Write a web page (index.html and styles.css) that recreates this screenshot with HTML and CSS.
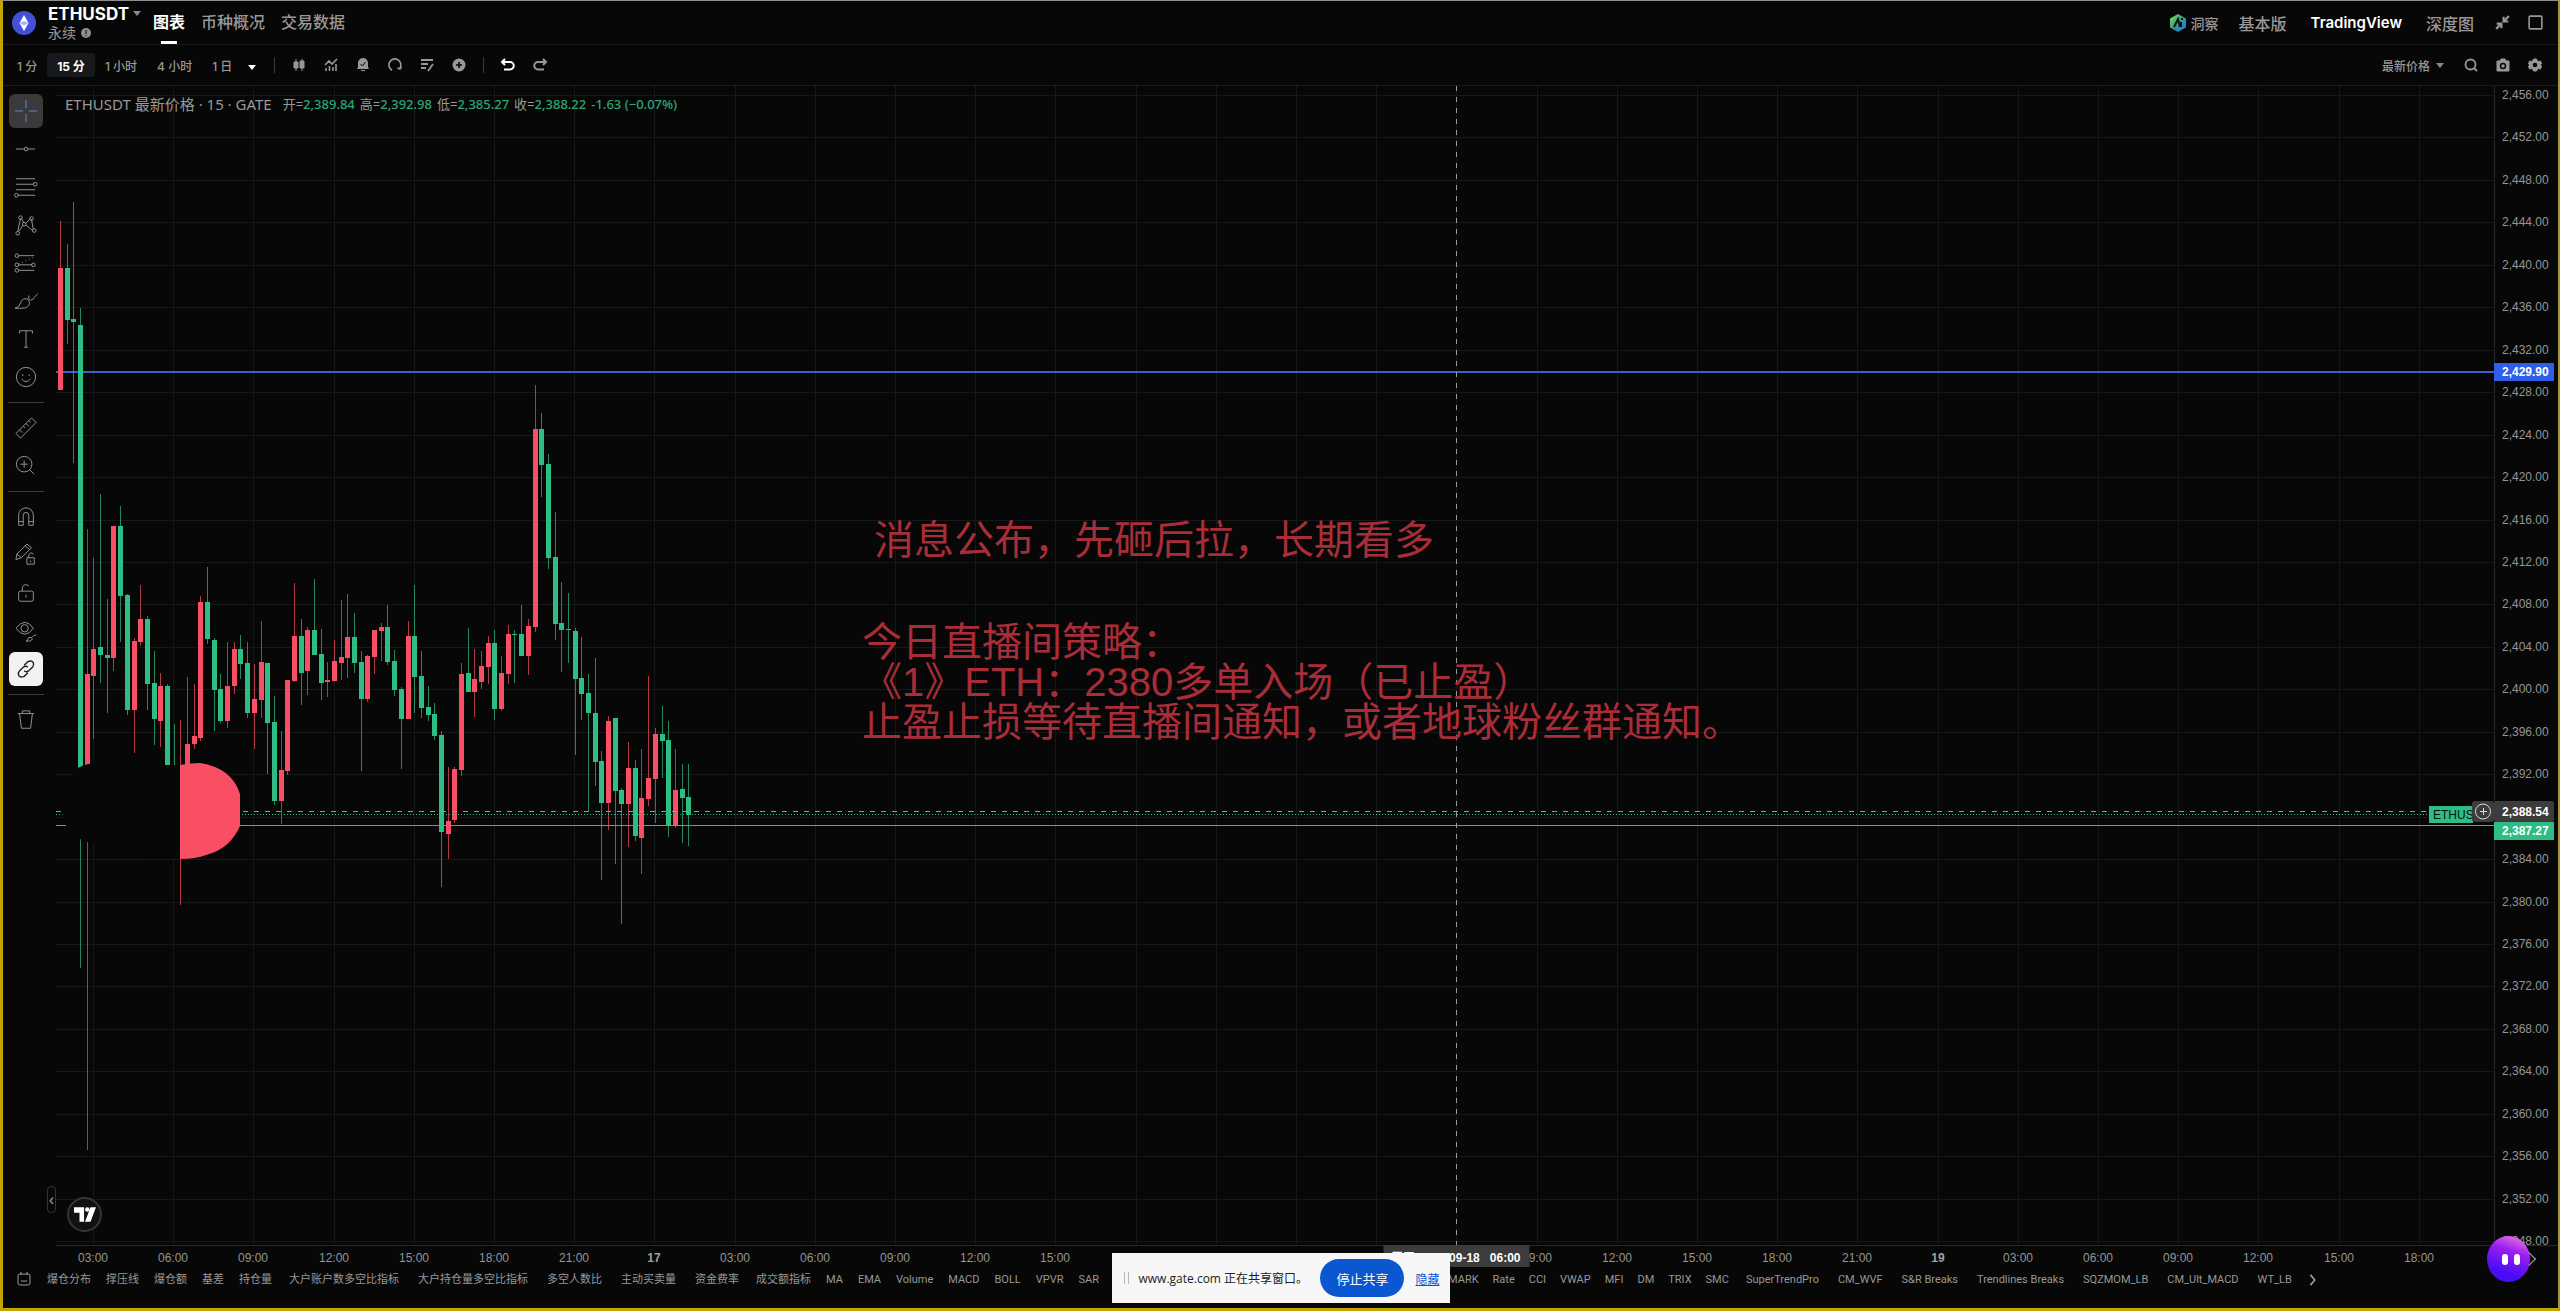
FILE: index.html
```
<!DOCTYPE html>
<html lang="zh-CN">
<head>
    <meta charset="UTF-8">
    <meta name="viewport" content="width=device-width, initial-scale=1.0">
    <title>ETHUSDT 永续</title>
    <link rel="stylesheet" href="styles.css">
</head>
<body>

    <header class="header">
        <svg class="coin" viewBox="0 0 24 24">
            <circle cx="12" cy="12" r="12" fill="#4450d8"/>
            <path d="M12 4l4.500 8L12 20l-4.500-8z" fill="#fff"/>
            <path d="M7.500 12L12 10l4.500 2L12 14.500z" fill="#aab2ff"/>
        </svg>
        <div class="pair">
            <button class="pair-name">ETHUSDT <span class="caret"></span></button>
            <div class="pair-type">永续
                <svg viewBox="0 0 12 12" width="12" height="12"><circle cx="6" cy="6" r="5" fill="#8f8f8f"/><path d="M6 3v4M6 8v1" stroke="#070707"/></svg>
            </div>
        </div>
        <nav class="tabs">
            <a href="#" class="active">图表</a>
            <a href="#">币种概况</a>
            <a href="#">交易数据</a>
        </nav>
        <div class="views">
            <a href="#" class="insight">
                <svg viewBox="0 0 18 20" width="18" height="20">
                    <defs><linearGradient id="hex" x1="0" y1="0" x2="1" y2="1"><stop offset="0" stop-color="#8be04a"/><stop offset=".5" stop-color="#2f9f8c"/><stop offset="1" stop-color="#2565f0"/></linearGradient></defs>
                    <path d="M9 1l8 4.500v9L9 19l-8-4.500v-9z" fill="url(#hex)"/>
                    <path d="M5 14L9 6l2 8M12 9v5M13 5v2" fill="none" stroke="#0a1512" stroke-width="2"/>
                </svg>
                洞察
            </a>
            <a href="#">基本版</a>
            <a href="#" class="active">TradingView</a>
            <a href="#">深度图</a>
        </div>
        <div class="window-buttons">
            <button aria-label="收起"><svg viewBox="0 0 16 16"><path d="M14 2L9.500 6.500M9 2.500V7h4.500M2 14l4.500-4.500M7 13.500V9H2.500" stroke-width="2"/></svg></button>
            <button aria-label="全屏"><svg viewBox="0 0 16 16"><rect x="2" y="2" width="12" height="12" rx="1" stroke-width="1.500"/></svg></button>
        </div>
    </header>

    <div class="toolbar">
        <div class="intervals">
            <button>1 分</button>
            <button class="active">15 分</button>
            <button>1 小时</button>
            <button>4 小时</button>
            <button>1 日</button>
            <button class="more" aria-label="更多周期"><span class="caret white"></span></button>
        </div>
        <span class="sep"></span>
        <div class="tools">
            <button aria-label="K线样式"><svg viewBox="0 0 16 16"><path d="M5 2v12M11 2v12"/><path d="M3 5h4v6H3zM9 4h4v7H9z" fill="currentColor"/></svg></button>
            <button aria-label="指标"><svg viewBox="0 0 16 16"><path d="M2 8l4-4 3 3 5-5M3 11v3M6.500 9v5M10 10v4M13 7v7" stroke-width="1.600"/></svg></button>
            <button aria-label="提醒"><svg viewBox="0 0 16 16"><path d="M8 1a5 5 0 0 1 5 5v4l1 2H2l1-2V6a5 5 0 0 1 5-5zM6 13h4v1H6z" fill="currentColor" stroke="none"/><path d="M5.500 7l2 2 3-4" stroke="#070707"/></svg></button>
            <button aria-label="回放"><svg viewBox="0 0 16 16"><path d="M5 13.200A6 6 0 1 1 13 11M14.500 9.500L13 12l-2.500-1" stroke-width="1.600"/></svg></button>
            <button aria-label="编辑"><svg viewBox="0 0 16 16"><path d="M2 3h12M2 7h7M2 11h5M9 14l5-7" stroke-width="1.800"/></svg></button>
            <button aria-label="添加"><svg viewBox="0 0 16 16"><circle cx="8" cy="8" r="6.500" fill="currentColor" stroke="none"/><path d="M8 5v6M5 8h6" stroke="#070707" stroke-width="1.600"/></svg></button>
        </div>
        <span class="sep"></span>
        <div class="tools">
            <button class="white" aria-label="撤销"><svg viewBox="0 0 16 16"><path d="M5 2L2 5l3 3M2 5h8a3.500 3.500 0 0 1 0 7.500H4" stroke-width="2"/></svg></button>
            <button aria-label="重做"><svg viewBox="0 0 16 16"><path d="M11 2l3 3-3 3M14 5H6a3.500 3.500 0 0 0 0 7.500h6" stroke-width="2"/></svg></button>
        </div>
        <div class="tools right">
            <button class="price-type">最新价格 <span class="caret"></span></button>
            <button aria-label="搜索"><svg viewBox="0 0 16 16"><circle cx="7.500" cy="7.500" r="5" stroke-width="1.800"/><path d="M11 11l3 3" stroke-width="1.800"/></svg></button>
            <button aria-label="截图"><svg viewBox="0 0 16 16"><path d="M2 4h3l1-2h4l1 2h3v10H2z" fill="currentColor"/><circle cx="8" cy="9" r="2.500" stroke="#070707" stroke-width="1.500"/></svg></button>
            <button aria-label="设置"><svg viewBox="0 0 16 16"><path d="M6.500 2h3l.5 1.500 1.500 1 2-.5 1 3L13 8l1.500 1-1 3-2-.5-1.500 1-.5 1.500h-3L6 12.500l-1.500-1-2 .5-1-3L3 8 1.500 7l1-3 2 .5 1.500-1z" fill="currentColor"/><circle cx="8" cy="8" r="2.300" fill="#070707" stroke="none"/></svg></button>
        </div>
    </div>

    <main class="workspace">
        <aside class="drawing">
            <button class="cross" aria-label="十字线"><svg viewBox="0 0 24 24"><path d="M12 0v9M12 15v9M0 12h9M15 12h9"/></svg></button>
            <button aria-label="趋势线"><svg viewBox="0 0 24 24"><path d="M1 12h9M14 12h8"/><circle cx="12" cy="12" r="2"/></svg></button>
            <button aria-label="斐波那契"><svg viewBox="0 0 24 24"><path d="M1 3h21M1 9h19M1 15h21M3 21h19"/><circle cx="22" cy="9" r="2"/><circle cx="1.500" cy="21" r="2"/></svg></button>
            <button aria-label="形态"><svg viewBox="0 0 24 24"><path d="M3 19L6 5M7 5l3 5M12 10l5-5M18 6l2 11M12 12l7 6M9 12l-5 7"/><circle cx="6" cy="4" r="2"/><circle cx="18" cy="5" r="2"/><circle cx="3" cy="21" r="2"/><circle cx="21" cy="18" r="2"/><circle cx="10" cy="11" r="2"/></svg></button>
            <button aria-label="预测"><svg viewBox="0 0 24 24"><path d="M4 4h17M4 14h15M4 20h17"/><path d="M4 13L20 6" stroke-dasharray="1 3"/><circle cx="2" cy="4" r="2"/><circle cx="2" cy="14" r="2"/><circle cx="20" cy="14" r="2"/><circle cx="2" cy="20" r="2"/></svg></button>
            <button aria-label="画笔"><svg viewBox="0 0 24 24"><path d="M0 20q5-1 6-6 2-6 8-4 4 5-1 9-2 1-13 1zM15 6q-1 4 2 5 3 0 4-3l4-4"/></svg></button>
            <button aria-label="文字"><svg viewBox="0 0 24 24"><path d="M5 6V3h14v3M12 3v18M10 21h4"/></svg></button>
            <button aria-label="表情"><svg viewBox="0 0 24 24"><circle cx="12" cy="12" r="10.500"/><path d="M7 14q5 6 10 0M8.500 9v2M15.500 9v2"/></svg></button>
            <hr>
            <button aria-label="尺子"><svg viewBox="0 0 24 24"><path d="M1 18L18 1l5 5L6 23zM5 14l3 3M9 10l2 2M12 7l3 3M15 4l2 2"/></svg></button>
            <button aria-label="放大"><svg viewBox="0 0 24 24"><circle cx="10" cy="10" r="8.500"/><path d="M16 16l5 5M10 6v8M6 10h8"/></svg></button>
            <hr>
            <button aria-label="磁铁"><svg viewBox="0 0 24 24"><path d="M4 21V10a8 8 0 0 1 16 0v11h-5V10a3 3 0 0 0-6 0v11zM4 17h5M15 17h5"/></svg></button>
            <button aria-label="锁定画图"><svg viewBox="0 0 24 24"><path d="M1 17l1-6L13 0l5 4L7 15zM2 11l5 4M11 2l5 4M13 15h8v7h-8zM15 15v-3q2-4 5-1M17 18v2"/></svg></button>
            <button aria-label="锁定"><svg viewBox="0 0 24 24"><rect x="4" y="10" width="16" height="11" rx="2"/><path d="M8 10V6q2-5 7-2M12 14v3"/></svg></button>
            <button aria-label="隐藏"><svg viewBox="0 0 24 24"><path d="M1 9q10-13 19 0-9 13-19 0zM12 23q2 0 3-4 4-1 4 2-2 3-7 2zM19 18l4-2"/><circle cx="10.500" cy="9" r="4"/></svg></button>
            <button class="linked" aria-label="同步"><svg viewBox="0 0 24 24"><path d="M10 8l4-4q4-2 6 1 1 3-1 5l-4 4q-3 2-5 0M14 16l-4 4q-4 2-6-1-1-3 1-5l4-4q3-2 5 0" stroke-width="1.500"/></svg></button>
            <hr>
            <button aria-label="删除"><svg viewBox="0 0 24 24"><path d="M3 5h18M8 5V2h8v3M5 5l2 16h10l2-16"/></svg></button>
            <button class="fold" aria-label="折叠">‹</button>
        </aside>

        <section class="chart">
            <svg id="chart"></svg>
            <div class="legend">
                <span class="title">ETHUSDT 最新价格 · 15 · GATE</span>
                <span>开=<b>2,389.84</b></span>
                <span>高=<b>2,392.98</b></span>
                <span>低=<b>2,385.27</b></span>
                <span>收=<b>2,388.22</b></span>
                <b>-1.63 (−0.07%)</b>
            </div>
            <p class="note news">消息公布，先砸后拉，长期看多</p>
            <p class="note plan">今日直播间策略：<br>《1》ETH：2380多单入场（已止盈）<br>止盈止损等待直播间通知，或者地球粉丝群通知。</p>
            <a href="#" class="tv-logo" aria-label="TradingView">
                <svg viewBox="0 0 24 18" width="22" height="17"><path d="M0 1h11v16H6V7H0zM18 1h6l-6 16h-6z" fill="#fff"/><circle cx="14.500" cy="3.500" r="2.500" fill="#fff"/></svg>
            </a>
        </section>
    </main>

    <footer class="indicators">
        <svg class="list-icon" viewBox="0 0 16 16"><rect x="2" y="3" width="12" height="11" rx="2"/><path d="M5 1v3M11 1v3M5 10h6"/></svg>
        <div class="group">
            <a href="#">爆仓分布</a><a href="#">撑压线</a><a href="#">爆仓额</a><a href="#">基差</a><a href="#">持仓量</a>
        </div>
        <div class="group wide">
            <a href="#">大户账户数多空比指标</a><a href="#">大户持仓量多空比指标</a><a href="#">多空人数比</a><a href="#">主动买卖量</a><a href="#">资金费率</a>
        </div>
        <div class="group">
            <a href="#">成交额指标</a><a href="#">MA</a><a href="#">EMA</a><a href="#">Volume</a><a href="#">MACD</a><a href="#">BOLL</a><a href="#">VPVR</a><a href="#">SAR</a>
        </div>
        <div class="group after-share">
            <a href="#">MARK</a><a href="#">Rate</a><a href="#">CCI</a><a href="#">VWAP</a><a href="#">MFI</a><a href="#">DM</a><a href="#">TRIX</a><a href="#">SMC</a>
        </div>
        <div class="group wide">
            <a href="#">SuperTrendPro</a><a href="#">CM_WVF</a><a href="#">S&amp;R Breaks</a><a href="#">Trendlines Breaks</a><a href="#">SQZMOM_LB</a><a href="#">CM_Ult_MACD</a><a href="#">WT_LB</a>
        </div>
        <button class="next" aria-label="更多"><svg viewBox="0 0 8 14" width="8" height="12"><path d="M1 1l5 6-5 6" stroke-width="2"/></svg></button>
    </footer>

    <div class="share">
        <span class="grip"></span>
        <span class="share-text">www.gate.com 正在共享窗口。</span>
        <button>停止共享</button>
        <a href="#">隐藏</a>
    </div>

    <button class="assistant" aria-label="助手"><i></i><i></i></button>

    <script src="chart.js"></script>
</body>
</html>
```

FILE: styles.css
```
* {
    box-sizing: border-box;
}
body {
    margin: 0;
    height: 100vh;
    display: flex;
    flex-direction: column;
    position: relative;
    overflow: hidden;
    background-color: #070707;
    color: #989898;
    border: 3px solid #c4a500;
    border-top: 1px solid #8c8f8e;
    border-right: 2px solid #a8953a;
    font-family: Inter, "Noto Sans CJK SC", sans-serif;
    font-size: 12px;
}
button {
    padding: 0;
    border: none;
    background: none;
    color: inherit;
    font: inherit;
}
a {
    color: inherit;
    text-decoration: none;
}
svg {
    display: block;
    fill: none;
    stroke: currentColor;
}
.caret {
    display: inline-block;
    border: 4px solid transparent;
    border-top: 5px solid #8a8a8a;
    border-bottom: none;
}
.caret.white {
    border-top-color: #fff;
}

/* header */
.header {
    height: 44px;
    flex: none;
    display: flex;
    align-items: center;
    padding: 0 14px 0 9px;
    border-bottom: 1px solid #161616;
    font-size: 16px;
    font-weight: 500;
}
.coin {
    width: 24px;
    height: 24px;
    stroke: none;
}
.pair {
    margin-left: 12px;
    width: 105px;
}
.pair-name {
    display: flex;
    align-items: center;
    gap: 4px;
    color: #fff;
    font-size: 17px;
    font-weight: 700;
    line-height: 20px;
}
.pair-type {
    display: flex;
    align-items: center;
    gap: 4px;
    font-size: 14px;
    font-weight: 400;
    line-height: 18px;
}
.pair-type svg circle {
    stroke: none;
}
.tabs {
    display: flex;
    gap: 16px;
    line-height: 43px;
}
.tabs .active {
    position: relative;
    color: #fff;
    font-weight: 700;
}
.tabs .active::after {
    content: "";
    position: absolute;
    left: 8px;
    bottom: 0;
    width: 16px;
    height: 3px;
    background-color: #fff;
}
.views {
    margin-left: auto;
    display: flex;
    align-items: center;
    gap: 24px;
}
.views .active {
    color: #fff;
    font-size: 15px;
    font-weight: 600;
}
.insight {
    display: flex;
    align-items: center;
    gap: 4px;
    margin-right: -4px;
    font-size: 14px;
}
.insight path:first-of-type {
    stroke: none;
}
.window-buttons {
    display: flex;
    gap: 16px;
    margin-left: 20px;
}
.window-buttons svg {
    width: 17px;
    height: 17px;
}

/* interval bar */
.toolbar {
    height: 41px;
    flex: none;
    display: flex;
    align-items: center;
    padding: 0 15px 0 4px;
    border-bottom: 1px solid #1b1b1b;
    font-weight: 500;
}
.intervals {
    display: flex;
}
.intervals button {
    height: 24px;
    padding: 0 10px;
    border-radius: 4px;
}
.intervals .active {
    background-color: #17191b;
    color: #fff;
    font-weight: 700;
}
.intervals .more {
    padding: 0 6px;
}
.sep {
    width: 1px;
    height: 16px;
    margin: 0 16px;
    background-color: #3a3a3a;
}
.intervals + .sep {
    margin-left: 12px;
}
.tools {
    display: flex;
    align-items: center;
    gap: 16px;
}
.tools svg {
    width: 16px;
    height: 16px;
}
.tools .white {
    color: #fff;
}
.right {
    margin-left: auto;
}
.price-type {
    display: flex;
    align-items: center;
    gap: 6px;
    margin-right: 3px;
}

/* drawing tools */
.workspace {
    flex: 1;
    min-height: 0;
    display: flex;
}
.drawing {
    position: relative;
    width: 53px;
    flex: none;
    padding: 8px 0 0 6px;
    color: #9a9ca3;
}
.drawing button {
    display: flex;
    align-items: center;
    justify-content: center;
    width: 34px;
    height: 34px;
    margin: 0 0 4px;
    border-radius: 6px;
}
.drawing svg {
    width: 22px;
    height: 22px;
    overflow: visible;
}
.drawing hr {
    width: 36px;
    height: 1px;
    margin: 8px 0 8px -1px;
    border: none;
    background-color: #3c3c3c;
}
.drawing .cross {
    background-color: #3a3a3a;
    color: #5b8fd6;
}
.drawing .linked {
    background-color: #f2f2f2;
    color: #222;
}
.drawing .fold {
    position: absolute;
    right: 0;
    bottom: 56px;
    width: 9px;
    height: 27px;
    margin: 0;
    border: 1px solid #333;
    border-radius: 4px;
    font-size: 14px;
    color: #aaa;
}

/* chart */
.chart {
    position: relative;
    flex: 1;
    min-width: 0;
}
#chart {
    width: 100%;
    height: 100%;
    stroke: none;
    font-family: "Liberation Sans", "Noto Sans CJK SC", sans-serif;
    font-size: 12px;
}
.grid {
    stroke: #151819;
}
.axis {
    stroke: #26282b;
}
.up {
    fill: #f84f64;
}
.down {
    fill: #2ebd85;
}
.wick {
    opacity: 0.7;
}
.label {
    fill: #959595;
}
.label.day {
    font-weight: bold;
    fill: #a0a0a0;
}
.tag-text {
    fill: #fff;
    font-weight: bold;
}
.legend {
    position: absolute;
    left: 9px;
    top: 6px;
    display: flex;
    align-items: center;
    gap: 5px;
    font-family: "Noto Sans", "Noto Sans CJK SC", sans-serif;
    font-size: 13px;
    line-height: 24px;
    white-space: nowrap;
}
.legend .title {
    margin-right: 6px;
    font-size: 15px;
}
.legend b {
    color: #2ba676;
    font-weight: 500;
}
.note {
    position: absolute;
    margin: 0;
    color: #a92d38;
    font-family: "Liberation Sans", "Noto Sans CJK SC", sans-serif;
    font-size: 40px;
    line-height: 40px;
    white-space: nowrap;
}
.news {
    left: 818px;
    top: 434px;
}
.plan {
    left: 806px;
    top: 536px;
}
.tv-logo {
    position: absolute;
    left: 11px;
    bottom: 37px;
    width: 35px;
    height: 35px;
    display: flex;
    align-items: center;
    justify-content: center;
    border: 2px solid #363636;
    border-radius: 50%;
    background-color: #111;
}
.tv-logo svg {
    stroke: none;
}

/* indicator list */
.indicators {
    height: 39px;
    flex: none;
    display: flex;
    align-items: flex-start;
    padding: 2px 0 0 13px;
    font-family: Roboto, "Noto Sans CJK SC", sans-serif;
    font-size: 11px;
    line-height: 18px;
    white-space: nowrap;
}
.list-icon {
    width: 16px;
    height: 16px;
    margin-right: 15px;
}
.group {
    display: flex;
    gap: 15px;
}
.wide {
    gap: 19px;
    margin: 0 17px;
}
.after-share {
    gap: 14px;
    margin-left: 349px;
}
.next svg {
    margin-top: 3px;
}

/* screen sharing bar */
.share {
    position: absolute;
    left: 50%;
    bottom: 5px;
    transform: translateX(-50%);
    width: 338px;
    height: 50px;
    display: flex;
    align-items: center;
    padding: 0 10px 0 12px;
    background-color: #f7f7f7;
    color: #222;
    white-space: nowrap;
}
.grip {
    width: 5px;
    height: 12px;
    margin-right: 10px;
    border: 1px solid #bbb;
    border-width: 0 1px;
}
.share-text {
    font-family: "Open Sans", "Noto Sans CJK SC", sans-serif;
    font-size: 12px;
}
.share button {
    width: 84px;
    height: 38px;
    margin-left: auto;
    border-radius: 19px;
    background-color: #0b57d0;
    color: #fff;
    font-size: 13px;
}
.share a {
    margin-left: 11px;
    color: #0b57d0;
    text-decoration: underline;
}

.assistant {
    position: absolute;
    right: 28px;
    bottom: 26px;
    width: 43px;
    height: 46px;
    display: flex;
    align-items: center;
    justify-content: center;
    gap: 6px;
    padding-left: 4px;
    border-radius: 50%;
    background: linear-gradient(200deg, #f07be0 5%, #9a1ef0 35%, #4a0cf5 75%);
}
.assistant::after {
    content: "";
    position: absolute;
    right: -4px;
    width: 9px;
    height: 9px;
    border: 1px solid #aaa;
    border-width: 1px 1px 0 0;
    transform: rotate(45deg);
}
.assistant i {
    width: 6px;
    height: 11px;
    border-radius: 3px;
    background-color: #fff;
}
```

FILE: chart.js
```
// [direction, high, body top, body bottom, low]
var candles = [
    ['u',135,182,304,304],['d',158,182,234,258],['d',116,233,236,377],['d',222,239,700,882],['u',443,588,700,1064],
    ['u',472,563,590,653],['d',408,561,569,597],['d',513,569,572,627],['u',440,440,572,585],['d',420,440,510,556],
    ['d',508,509,624,629],['u',552,555,624,667],['u',499,533,556,560],['d',530,533,598,624],['d',565,597,633,659],
    ['u',587,600,635,661],['d',598,600,700,700],['d',638,690,700,700],['u',634,690,760,819],['u',591,658,690,690],
    ['u',598,650,658,663],['u',510,516,652,655],['d',481,516,553,558],['d',552,554,604,645],['d',588,603,635,637],
    ['u',556,600,635,642],['u',556,563,600,608],['d',549,563,578,593],['d',556,577,627,632],['u',578,613,627,663],
    ['u',535,576,614,632],['d',577,577,637,688],['d',610,636,715,719],['u',645,684,715,738],['u',594,594,685,689],
    ['u',497,550,595,596],['d',533,550,587,619],['u',541,544,585,609],['d',493,544,569,569],['d',543,568,597,614],
    ['u',576,594,596,611],['u',554,575,595,596],['u',514,571,577,594],['u',508,551,572,592],['d',527,551,577,587],
    ['d',565,576,613,685],['u',569,570,613,616],['u',544,544,571,588],['u',537,541,545,575],['d',519,541,576,579],
    ['d',564,575,604,610],['d',601,603,633,683],['u',535,550,633,633],['d',499,550,591,627],['d',565,590,622,632],
    ['d',600,621,629,635],['d',617,628,650,654],['d',645,649,746,801],['u',681,735,748,773],['u',681,683,734,737],
    ['u',577,588,684,690],['d',542,587,606,606],['u',563,593,606,631],['u',565,580,596,603],['u',550,557,581,598],
    ['d',544,557,623,634],['u',570,587,623,625],['u',539,548,588,598],['d',544,548,549,597],['d',519,548,570,570],
    ['u',533,540,570,589],['u',299,343,541,546],['d',327,343,379,411],['d',368,378,472,483],['d',426,471,538,554],
    ['d',496,537,544,586],['d',507,543,544,577],['d',542,545,593,669],['d',551,592,608,634],['d',588,607,627,726],
    ['d',572,627,676,700],['d',665,675,717,794],['u',630,635,717,744],['d',632,632,705,778],['d',702,704,718,838],
    ['u',656,682,718,761],['d',674,682,750,755],['u',663,712,752,788],['u',590,692,713,720],['u',642,648,693,737],
    ['d',620,648,655,692],['d',635,654,739,751],['u',663,704,740,742],['d',678,703,712,757],['d',678,711,729,760]
];

var svg = document.getElementById('chart');
var hourStep = 80.2;
var priceStep = 42.45;
var firstTick = 37;
var firstPrice = 9;
var cursorTick = 17;

function line(x1, y1, x2, y2, attrs) {
    return '<line x1="' + x1 + '" y1="' + y1 + '" x2="' + x2 + '" y2="' + y2 + '" ' + attrs + '/>';
}
function rect(x, y, w, h, attrs) {
    return '<rect x="' + x + '" y="' + y + '" width="' + w + '" height="' + h + '" ' + attrs + '/>';
}
function text(x, y, str, attrs) {
    return '<text x="' + x + '" y="' + y + '" ' + attrs + '>' + str + '</text>';
}

function draw() {
    var width = svg.clientWidth;
    var height = svg.clientHeight;
    var right = width - 64;
    var bottom = height - 24;
    var out = '';
    var i, x, y;

    // price grid and labels
    for (i = 0; firstPrice + i * priceStep < bottom; i++) {
        y = Math.round(firstPrice + i * priceStep);
        out += line(0, y + 0.5, right, y + 0.5, 'class="grid"');
        out += text(right + 8, y + 4, '2,' + (456 - i * 4) + '.00', 'class="label"');
    }

    // time grid and labels
    for (i = 0; firstTick + i * hourStep < right; i++) {
        x = Math.round(firstTick + i * hourStep);
        out += line(x + 0.5, 0, x + 0.5, bottom, 'class="grid"');
        // the cursor tag takes the place of this label
        if (i === cursorTick) {
            continue;
        }
        var hour = (3 + i * 3) % 24;
        if (hour === 0) {
            out += text(x, bottom + 17, 17 + (i - 7) / 8, 'class="label day" text-anchor="middle"');
        } else {
            out += text(x, bottom + 17, (hour < 10 ? '0' : '') + hour + ':00', 'class="label" text-anchor="middle"');
        }
    }
    out += line(right + 0.5, 0, right + 0.5, bottom, 'class="axis"');
    out += line(0, bottom + 0.5, width, bottom + 0.5, 'class="axis"');

    // candles
    out += line(0, 286, right, 286, 'stroke="#3a5fd0" stroke-width="2"');
    candles.forEach(function (c, n) {
        var cx = Math.round(4 + n * hourStep / 12);
        var cls = c[0] === 'u' ? 'up' : 'down';
        out += rect(cx, c[1], 1, c[4] - c[1], 'class="wick ' + cls + '"');
        out += rect(cx - 2, c[2], 5, c[3] - c[2], 'class="' + cls + '"');
    });

    // price lines and crosshair
    out += line(0, 739.5, right, 739.5, 'stroke="#2ebd85"');
    out += line(0, 728.5, right, 728.5, 'stroke="#2ebd85" stroke-dasharray="1 2"');
    out += line(0, 725.5, right, 725.5, 'stroke="#9a9a9a" stroke-dasharray="5 6"');
    x = Math.round(firstTick + cursorTick * hourStep) + 0.5;
    out += line(x, 0, x, bottom, 'stroke="#9a9a9a" stroke-dasharray="5 6"');

    // brush marks
    out += '<path fill="#070707" d="M124 679H60Q36 674 22 682Q6 700 6 725Q8 745 24 753Q60 770 124 773Z"/>';
    out += '<path class="up" d="M124 679Q134 677 144 677Q176 682 184 708V740Q174 763 150 769Q140 773 124 773Z"/>';

    // tags
    out += rect(right, 277, 60, 18, 'fill="#2f5fe8"') + text(right + 8, 290, '2,429.90', 'class="tag-text"');
    out += rect(right - 65, 720, 44, 17, 'class="down"') + text(right - 61, 733, 'ETHUS', 'fill="#03150e"');
    out += rect(right - 22, 715, 22, 21, 'rx="3" fill="#3c3c3c"');
    out += '<circle cx="' + (right - 11) + '" cy="725.5" r="7.500" fill="none" stroke="#ddd"/>';
    out += line(right - 14, 725.5, right - 7, 725.5, 'stroke="#ddd"') + line(right - 10.5, 722, right - 10.5, 729, 'stroke="#ddd"');
    out += rect(right, 736, 60, 18, 'class="down"') + text(right + 8, 749, '2,387.27', 'class="tag-text"');
    out += rect(right, 715, 60, 21, 'rx="2" fill="#3c3c3c"') + text(right + 8, 730, '2,388.54', 'class="tag-text"');
    out += rect(x - 73, bottom, 146, 22, 'fill="#3c3c3c"') + text(x + 64, bottom + 17, '周五 2026-09-18 &#160; 06:00', 'class="tag-text" text-anchor="end"');

    svg.innerHTML = out;
}

window.addEventListener('resize', draw);
draw();
```
